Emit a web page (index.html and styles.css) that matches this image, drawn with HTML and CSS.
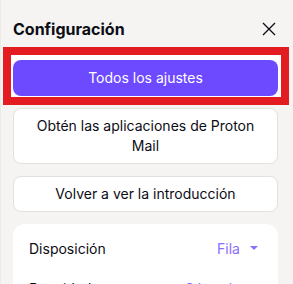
FILE: index.html
```html
<!DOCTYPE html>
<html lang="es">
<head>
<meta charset="utf-8">
<link rel="stylesheet" href="styles.css">
</head>
<body>
<aside class="panel">
  <header class="head">
    <h1 class="title">Configuración</h1>
    <button class="close" aria-label="Cerrar">
      <svg width="14" height="14" viewBox="0 0 14 14"><path d="M1 1L13 13M13 1L1 13" stroke="#0c0c14" stroke-width="1.3" fill="none"/></svg>
    </button>
  </header>
  <div class="highlight">
    <button class="btn primary">Todos los ajustes</button>
  </div>
  <button class="btn outline two">Obtén las aplicaciones de Proton Mail</button>
  <button class="btn outline">Volver a ver la introducción</button>
  <section class="card">
    <div class="row"><span>Disposición</span><span class="val">Fila <svg width="8" height="4" viewBox="0 0 8 4"><path d="M0 0H8L4 4Z" fill="#8a6eff"/></svg></span></div>
    <div class="row"><span>Densidad</span><span class="val">Cómoda <svg width="8" height="4" viewBox="0 0 8 4"><path d="M0 0H8L4 4Z" fill="#8a6eff"/></svg></span></div>
  </section>
</aside>
</body>
</html>
```
FILE: styles.css
```css
* { box-sizing: border-box; }
html, body { margin: 0; height: 100%; }
body {
  background: #f5f4f2;
  font-family: Inter, "Noto Sans", sans-serif;
  color: #0c0c14;
  overflow: hidden;
}
.panel {
  display: flex;
  flex-direction: column;
  padding: 0 15px 0 12px;
  border-left: 1px solid #ecebe8;
  height: 100%;
}
.panel > * { flex-shrink: 0; }
.head {
  height: 47px;
  display: flex;
  align-items: center;
  justify-content: space-between;
  padding-top: 10px;
}
.title {
  margin: 0;
  font-size: 16px;
  font-weight: 700;
  line-height: 24px;
}
.close {
  border: 0;
  background: none;
  padding: 0;
  width: 14px;
  height: 14px;
  margin-right: 2px;
  display: flex;
}
.highlight {
  margin: 0 -11px 0 -10px;
  border: 8px solid #e31c22;
  background: #fff;
  padding: 5px 3px 1px 2px;
}
.btn {
  font-family: inherit;
  font-size: 14px;
  line-height: 20px;
  border-radius: 8px;
  width: 100%;
  text-align: center;
  cursor: pointer;
}
.primary {
  display: block;
  height: 36px;
  background: #6d4aff;
  color: #fff;
  border: 0;
}
.outline {
  background: #fff;
  color: #0c0c14;
  border: 1px solid #e3e1de;
  height: 36px;
  margin-top: 12px;
  padding: 0 20px;
}
.two {
  margin-top: 3px;
  height: 56px;
  padding: 7px 20px;
}
.card {
  margin-top: 12px;
  background: #fff;
  border-radius: 12px;
  padding: 4px 16px 0 16px;
  flex: 1 0 auto;
}
.row {
  display: flex;
  justify-content: space-between;
  align-items: center;
  height: 40px;
  font-size: 14px;
}
.val {
  color: #8a6eff;
  display: flex;
  align-items: center;
  gap: 10px;
  margin-right: 4px;
}
```
